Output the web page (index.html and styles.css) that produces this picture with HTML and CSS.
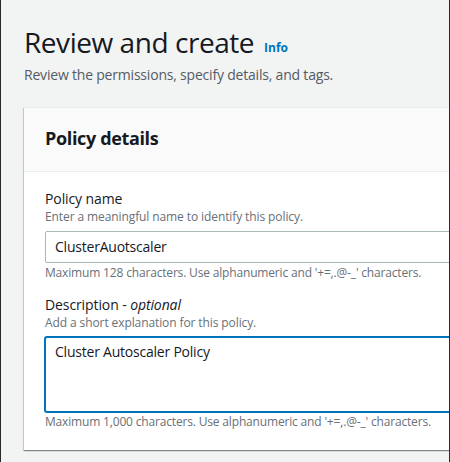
FILE: index.html
```html
<!DOCTYPE html>
<html>
<head>
<meta charset="utf-8">
<link rel="stylesheet" href="styles.css">
</head>
<body>
<div class="frame">
  <div class="page">
    <header class="page-head">
      <h1 class="title"><span class="title-text">Review and create</span><a class="info" href="#">Info</a></h1>
      <p class="subtitle">Review the permissions, specify details, and tags.</p>
    </header>
    <section class="card">
      <div class="card-head">
        <h2 class="card-title">Policy details</h2>
      </div>
      <div class="card-body">
        <div class="field">
          <div class="label">Policy name</div>
          <div class="desc">Enter a meaningful name to identify this policy.</div>
          <div class="input">ClusterAuotscaler</div>
          <div class="constraint">Maximum 128 characters. Use alphanumeric and '+=,.@-_' characters.</div>
        </div>
        <div class="field">
          <div class="label">Description - <i>optional</i></div>
          <div class="desc">Add a short explanation for this policy.</div>
          <div class="textarea">Cluster Autoscaler Policy</div>
          <div class="constraint">Maximum 1,000 characters. Use alphanumeric and '+=,.@-_' characters.</div>
        </div>
      </div>
    </section>
  </div>
</div>
</body>
</html>
```
FILE: styles.css
```css
html, body {
  margin: 0;
  padding: 0;
  background: #f2f3f3;
}
.frame {
  width: 450px;
  height: 462px;
  box-sizing: border-box;
  border-left: 1px solid #2b2b2b;
  border-right: 1px solid #2b2b2b;
  overflow: hidden;
  background: #f2f3f3;
  font-family: "Open Sans", "Noto Sans", sans-serif;
  color: #16191f;
}
.page {
  padding: 22px 0 0 23px;
  width: 480px;
}
.title {
  margin: 0;
  display: flex;
  align-items: baseline;
  gap: 10px;
  font-weight: 400;
}
.title-text {
  font-size: 28px;
  line-height: 40px;
  letter-spacing: -0.45px;
}
.info {
  font-size: 12px;
  line-height: 16px;
  font-weight: 700;
  color: #0073bb;
  text-decoration: none;
  position: relative;
  top: -1px;
}
.subtitle {
  margin: 3px 0 0 0;
  font-size: 14px;
  line-height: 20px;
  color: #545b64;
  letter-spacing: -0.2px;
}
.card {
  margin-top: 22px;
  background: #fff;
  box-shadow: 0 1px 1px 0 rgba(0,28,36,.3), 1px 1px 1px 0 rgba(0,28,36,.15), -1px 1px 1px 0 rgba(0,28,36,.15);
  border-top: 1px solid #eaeded;
}
.card-head {
  background: #fafafa;
  border-bottom: 1px solid #eaeded;
  padding: 18px 20px 21px 21px;
}
.card-title {
  margin: 0;
  font-size: 18px;
  font-weight: 700;
  line-height: 24px;
  letter-spacing: -0.35px;
}
.card-body {
  padding: 17px 0 20px 21px;
}
.field + .field {
  margin-top: 14px;
}
.label {
  font-size: 14px;
  line-height: 20px;
  color: #16191f;
  letter-spacing: -0.1px;
}
.desc {
  font-size: 12px;
  line-height: 16px;
  color: #687078;
  letter-spacing: -0.1px;
}
.input {
  margin-top: 6px;
  height: 32px;
  box-sizing: border-box;
  border: 1px solid #aab7b8;
  border-radius: 2px;
  padding: 5px 9px;
  font-size: 14px;
  line-height: 20px;
  letter-spacing: -0.22px;
  background: #fff;
}
.textarea {
  margin: 6px 0 2px 0;
  height: 75px;
  box-sizing: border-box;
  border: 1px solid #0073bb;
  box-shadow: 0 0 0 1px #0073bb;
  border-radius: 2px;
  padding: 4px 9px;
  font-size: 14px;
  line-height: 20px;
  letter-spacing: -0.22px;
  background: #fff;
}
.constraint {
  margin-top: 2px;
  font-size: 12px;
  line-height: 16px;
  color: #687078;
  letter-spacing: -0.17px;
}
```
